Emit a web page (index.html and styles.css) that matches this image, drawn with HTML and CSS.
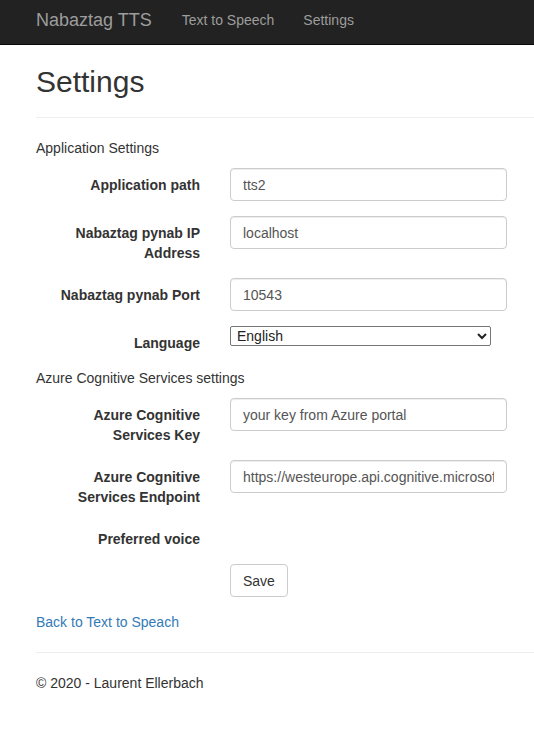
FILE: index.html
```html
<!DOCTYPE html>
<html lang="en">
<head>
<meta charset="utf-8">
<title>Settings - Nabaztag TTS</title>
<link rel="stylesheet" href="styles.css">
</head>
<body>
<nav class="navbar">
  <a class="brand" href="#">Nabaztag TTS</a>
  <a class="nav-link" href="#">Text to Speech</a>
  <a class="nav-link" href="#">Settings</a>
</nav>
<main class="container">
  <h2 class="page-title">Settings</h2>
  <hr class="rule rule-top">
  <form class="settings-form">
    <p class="section-title">Application Settings</p>
    <div class="form-row">
      <label class="form-label">Application path</label>
      <div class="form-field"><input class="form-input" type="text" value="tts2"></div>
    </div>
    <div class="form-row">
      <label class="form-label">Nabaztag pynab IP Address</label>
      <div class="form-field"><input class="form-input" type="text" value="localhost"></div>
    </div>
    <div class="form-row">
      <label class="form-label">Nabaztag pynab Port</label>
      <div class="form-field"><input class="form-input" type="text" value="10543"></div>
    </div>
    <div class="form-row">
      <label class="form-label">Language</label>
      <div class="form-field">
        <select class="form-select"><option>English</option></select>
      </div>
    </div>
    <p class="section-title">Azure Cognitive Services settings</p>
    <div class="form-row">
      <label class="form-label">Azure Cognitive Services Key</label>
      <div class="form-field"><input class="form-input" type="text" value="your key from Azure portal"></div>
    </div>
    <div class="form-row">
      <label class="form-label">Azure Cognitive Services Endpoint</label>
      <div class="form-field"><input class="form-input" type="text" value="https://westeurope.api.cognitive.microsoft.com/sts/v1.0/issuetoken"></div>
    </div>
    <div class="form-row">
      <label class="form-label">Preferred voice</label>
      <div class="form-field"></div>
    </div>
    <div class="form-row">
      <div class="form-label-empty"></div>
      <div class="form-field"><button class="btn" type="button">Save</button></div>
    </div>
  </form>
  <a class="back-link" href="#">Back to Text to Speach</a>
  <hr class="rule rule-bottom">
  <footer class="footer">
    <p class="footer-text">&copy; 2020 - Laurent Ellerbach</p>
  </footer>
</main>
</body>
</html>
```
FILE: styles.css
```css
html, body {
  margin: 0;
  padding: 0;
  background: #fff;
}
body {
  font-family: "Liberation Sans", Arial, sans-serif;
  font-size: 14px;
  line-height: 20px;
  color: #333;
}
a {
  text-decoration: none;
}
.navbar {
  display: flex;
  align-items: flex-start;
  height: 44px;
  background: #222;
  border-bottom: 1px solid #080808;
  padding-left: 36px;
  box-sizing: content-box;
}
.brand {
  font-size: 18px;
  line-height: 20px;
  padding-top: 10px;
  color: #9d9d9d;
  margin-right: 30px;
}
.nav-link {
  font-size: 14px;
  line-height: 20px;
  padding-top: 10px;
  color: #9d9d9d;
  margin-right: 29px;
}
.container {
  padding-left: 36px;
}
.page-title {
  font-family: "Liberation Sans", Arial, sans-serif;
  font-size: 30px;
  font-weight: 500;
  line-height: 33px;
  margin: 20px 0 0;
  color: #333;
}
.rule {
  border: 0;
  border-top: 1px solid #eee;
  height: 0;
  margin: 0;
}
.rule-top {
  margin-top: 19px;
  margin-bottom: 20px;
}
.rule-bottom {
  margin-top: 20px;
  margin-bottom: 20px;
}
.settings-form {
  margin: 0;
}
.section-title {
  margin: 0 0 10px;
}
.form-row {
  display: grid;
  grid-template-columns: 164px 277px;
  column-gap: 30px;
  margin-bottom: 15px;
  align-items: start;
}
.form-label {
  text-align: right;
  font-weight: bold;
  padding-top: 7px;
}
.form-input {
  display: block;
  box-sizing: border-box;
  width: 277px;
  height: 33px;
  padding: 6px 12px;
  font-family: "Liberation Sans", Arial, sans-serif;
  font-size: 14px;
  color: #555;
  background: #fff;
  border: 1px solid #ccc;
  border-radius: 4px;
  box-shadow: inset 0 1px 1px rgba(0, 0, 0, 0.075);
  outline: none;
}
.form-select {
  display: block;
  box-sizing: border-box;
  width: 261px;
  height: 20px;
  font-family: "Liberation Sans", Arial, sans-serif;
  font-size: 14px;
  color: #222;
  background: #fff;
  border: 1px solid #767676;
  border-radius: 2px;
  padding: 0 0 0 2px;
}
.btn {
  box-sizing: border-box;
  height: 33px;
  padding: 6px 12px;
  font-family: "Liberation Sans", Arial, sans-serif;
  font-size: 14px;
  line-height: 20px;
  color: #333;
  background: #fff;
  border: 1px solid #ccc;
  border-radius: 4px;
}
.back-link {
  display: block;
  color: #337ab7;
  width: max-content;
}
.footer-text {
  margin: 0;
}
```
